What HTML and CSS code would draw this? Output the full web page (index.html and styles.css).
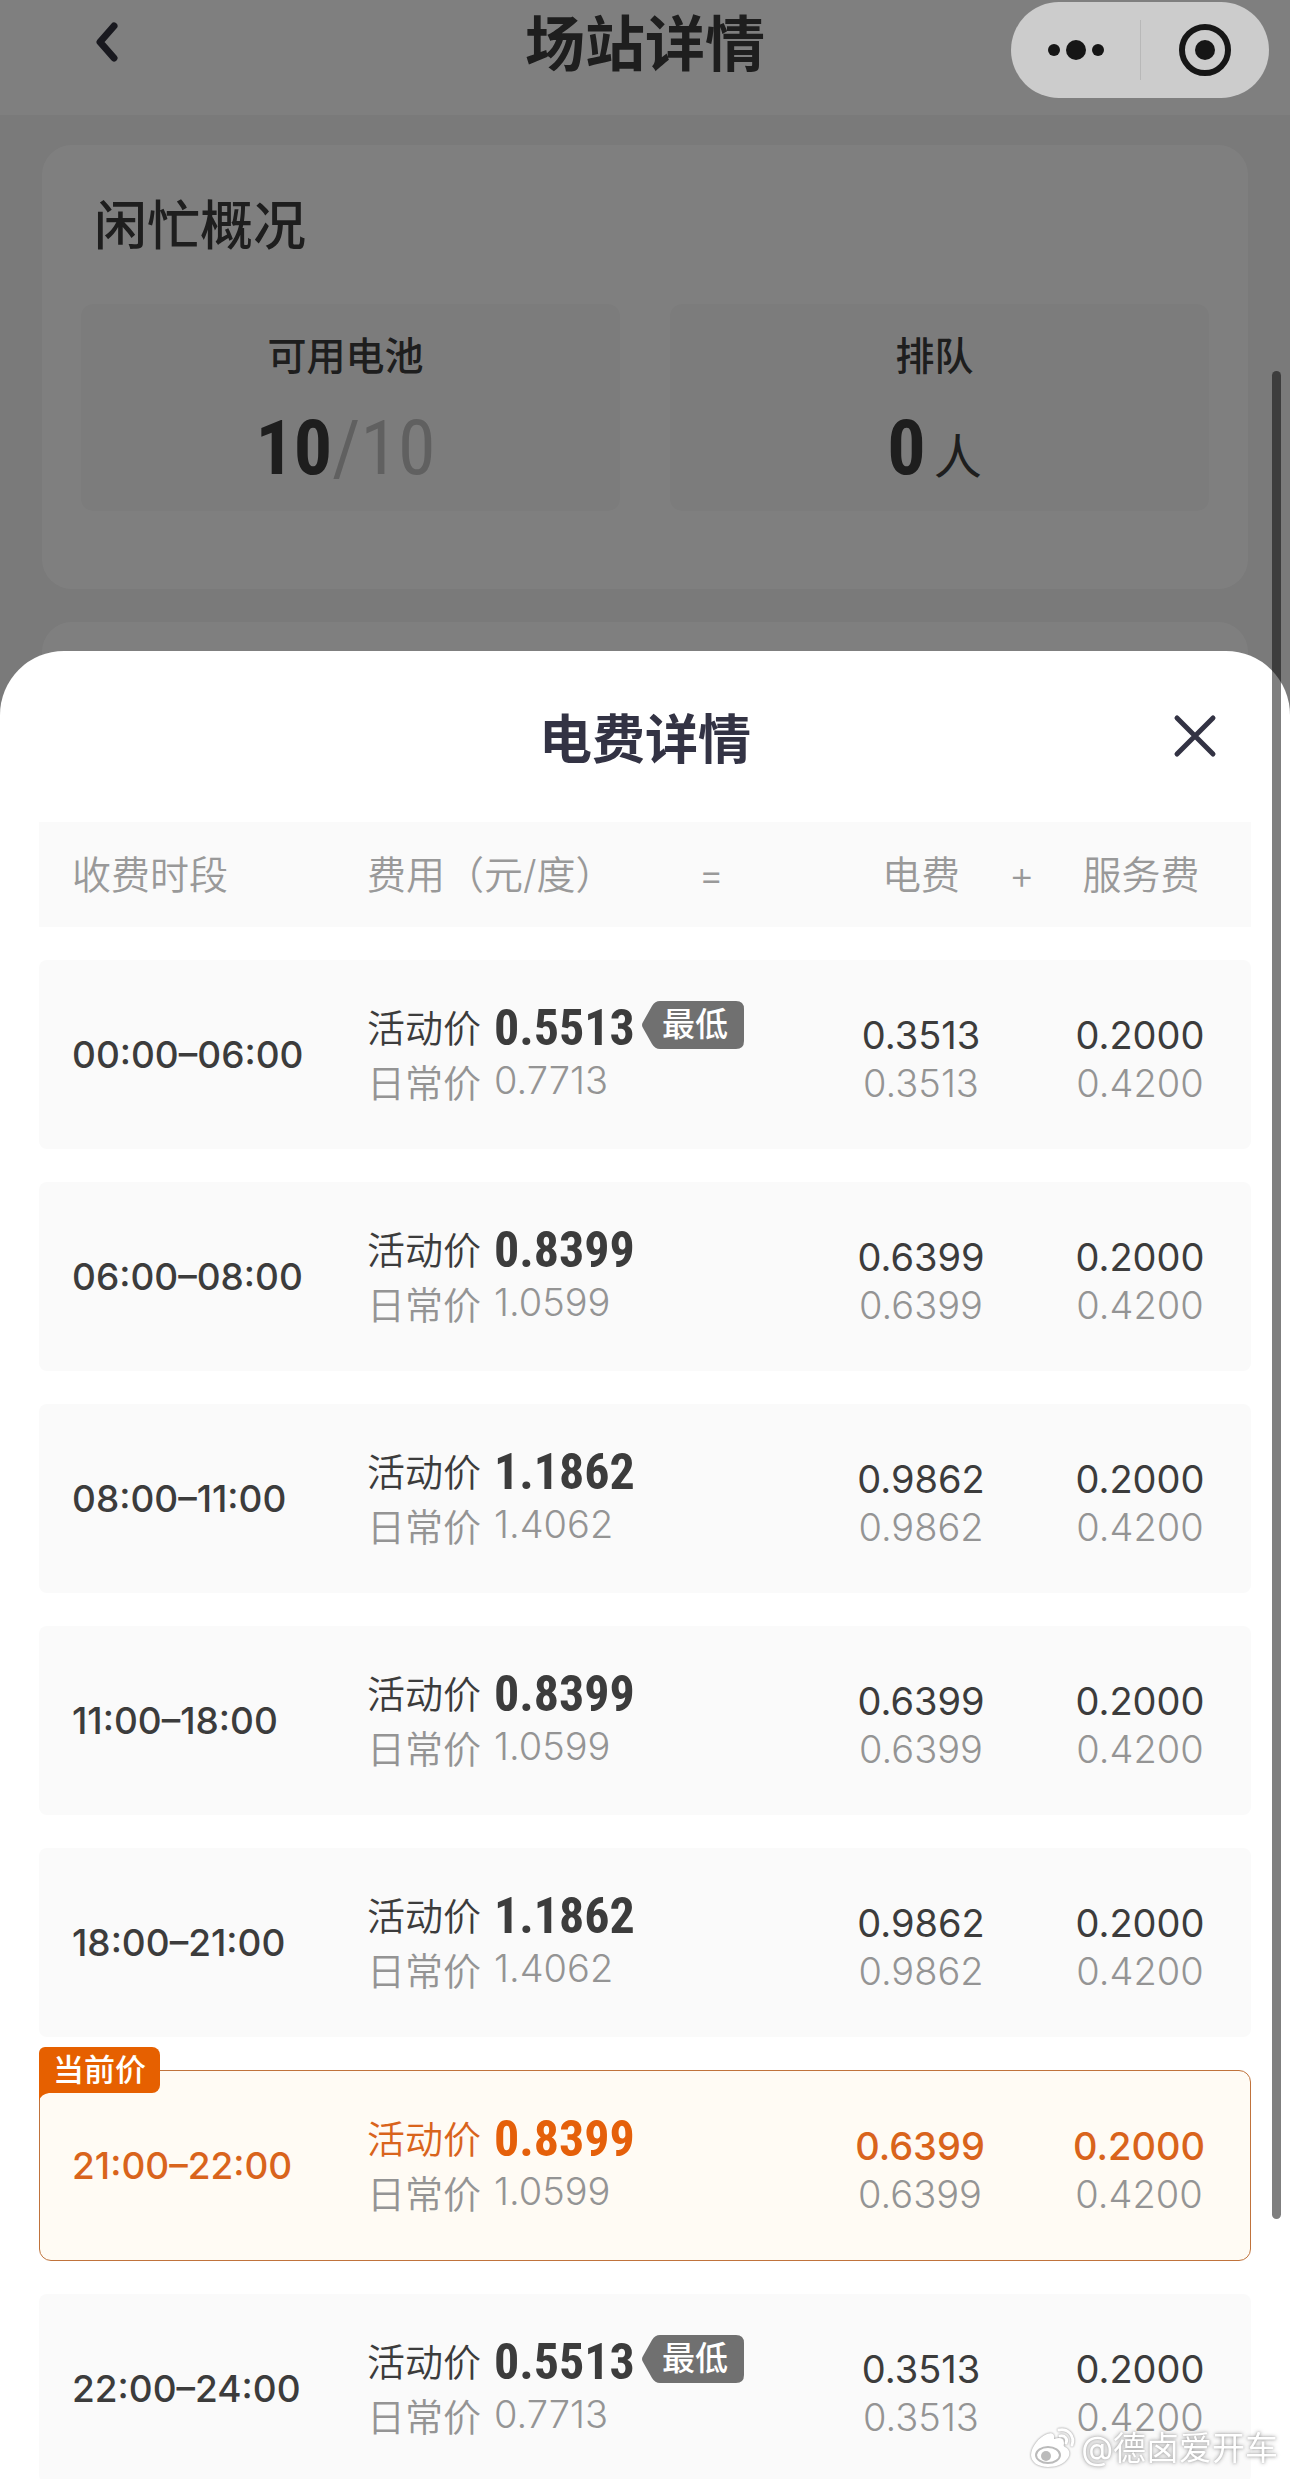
FILE: index.html
```html
<!DOCTYPE html>
<html lang="zh-CN">
	<head>
		<meta charset="UTF-8">
		<title>场站详情</title>
		<link rel="stylesheet" href="styles.css">
	</head>
	<body>
		<!--场站页面-->
		<div class="page">
			<header class="nav">
				<button class="nav-back" aria-label="返回">
					<svg width="24" height="40" viewBox="0 0 24 40"><path d="M20 4L6 20L20 36" /></svg>
				</button>
				<h1 class="nav-title">场站详情</h1>
			</header>
			<section class="card">
				<h2 class="card-title">闲忙概况</h2>
				<div class="stats">
					<div class="stat">
						<p class="stat-name">可用电池</p>
						<p class="stat-num"><b>10</b><span class="stat-total">/10</span></p>
					</div>
					<div class="stat">
						<p class="stat-name">排队</p>
						<p class="stat-num"><b>0</b><span class="stat-unit">人</span></p>
					</div>
				</div>
			</section>
			<section class="card card-next"></section>
		</div>

		<!--电费弹层-->
		<div class="mask">
			<div class="sheet">
				<div class="sheet-head">
					<h2 class="sheet-title">电费详情</h2>
					<button class="sheet-close" aria-label="关闭">
						<svg width="44" height="44" viewBox="0 0 44 44"><path d="M4 4L40 40M40 4L4 40" /></svg>
					</button>
				</div>
				<table class="price">
					<thead>
						<tr class="price-head">
							<th>收费时段</th>
							<th class="th-fee"><span>费用（元/度）</span><span>=</span></th>
							<th class="th-power">电费</th>
							<th class="th-service"><span>+</span><span>服务费</span></th>
						</tr>
					</thead>
					<tbody>
						<tr class="price-row">
							<td class="time">00:00–06:00</td>
							<td class="fee">
								<p class="now">活动价<b>0.5513</b><span class="low"><svg viewBox="0 0 102 48"><path d="M18 0H94Q102 0 102 8V40Q102 48 94 48H18Q13 48 10 43L1 27Q-1 24 1 21L10 5Q13 0 18 0Z" /></svg><i>最低</i></span></p>
								<p class="old">日常价<span>0.7713</span></p>
							</td>
							<td class="part"><p>0.3513</p><p class="old">0.3513</p></td>
							<td class="part part-last"><p>0.2000</p><p class="old">0.4200</p></td>
						</tr>
						<tr class="price-row">
							<td class="time">06:00–08:00</td>
							<td class="fee">
								<p class="now">活动价<b>0.8399</b></p>
								<p class="old">日常价<span>1.0599</span></p>
							</td>
							<td class="part"><p>0.6399</p><p class="old">0.6399</p></td>
							<td class="part part-last"><p>0.2000</p><p class="old">0.4200</p></td>
						</tr>
						<tr class="price-row">
							<td class="time">08:00–11:00</td>
							<td class="fee">
								<p class="now">活动价<b>1.1862</b></p>
								<p class="old">日常价<span>1.4062</span></p>
							</td>
							<td class="part"><p>0.9862</p><p class="old">0.9862</p></td>
							<td class="part part-last"><p>0.2000</p><p class="old">0.4200</p></td>
						</tr>
						<tr class="price-row">
							<td class="time">11:00–18:00</td>
							<td class="fee">
								<p class="now">活动价<b>0.8399</b></p>
								<p class="old">日常价<span>1.0599</span></p>
							</td>
							<td class="part"><p>0.6399</p><p class="old">0.6399</p></td>
							<td class="part part-last"><p>0.2000</p><p class="old">0.4200</p></td>
						</tr>
						<tr class="price-row">
							<td class="time">18:00–21:00</td>
							<td class="fee">
								<p class="now">活动价<b>1.1862</b></p>
								<p class="old">日常价<span>1.4062</span></p>
							</td>
							<td class="part"><p>0.9862</p><p class="old">0.9862</p></td>
							<td class="part part-last"><p>0.2000</p><p class="old">0.4200</p></td>
						</tr>
						<!--当前时段-->
						<tr class="price-row current">
							<td class="time"><span class="current-tag">当前价<svg width="10" height="8" viewBox="0 0 10 8"><path d="M0 0H10Q2 1 0 8Z" /></svg></span>21:00–22:00</td>
							<td class="fee">
								<p class="now">活动价<b>0.8399</b></p>
								<p class="old">日常价<span>1.0599</span></p>
							</td>
							<td class="part"><p>0.6399</p><p class="old">0.6399</p></td>
							<td class="part part-last"><p>0.2000</p><p class="old">0.4200</p></td>
						</tr>
						<tr class="price-row">
							<td class="time">22:00–24:00</td>
							<td class="fee">
								<p class="now">活动价<b>0.5513</b><span class="low"><svg viewBox="0 0 102 48"><path d="M18 0H94Q102 0 102 8V40Q102 48 94 48H18Q13 48 10 43L1 27Q-1 24 1 21L10 5Q13 0 18 0Z" /></svg><i>最低</i></span></p>
								<p class="old">日常价<span>0.7713</span></p>
							</td>
							<td class="part"><p>0.3513</p><p class="old">0.3513</p></td>
							<td class="part part-last"><p>0.2000</p><p class="old">0.4200</p></td>
						</tr>
					</tbody>
				</table>
			</div>
		</div>

		<!--右上角胶囊-->
		<div class="capsule">
			<button class="capsule-btn" aria-label="更多">
				<svg width="60" height="24" viewBox="0 0 60 24"><circle cx="8" cy="12" r="6" /><circle cx="30" cy="12" r="10" /><circle cx="52" cy="12" r="6" /></svg>
			</button>
			<button class="capsule-btn" aria-label="关闭小程序">
				<svg width="52" height="52" viewBox="0 0 52 52"><circle cx="26" cy="26" r="23" fill="none" stroke="#161616" stroke-width="6" /><circle cx="26" cy="26" r="10" /></svg>
			</button>
		</div>
		<div class="scrollbar"></div>
		<div class="watermark">
			<svg width="46" height="40" viewBox="0 0 46 40">
				<path d="M17 6C22 4 25 6 24 11C30 9 34 10 34 15C34 17 33 18 35 19C39 21 41 25 38 30C34 36 27 39 18 39C8 39 1 34 1 27C1 19 9 9 17 6Z" />
				<path class="wm-line" d="M29 2C38 0 45 8 42 17M30 8C35 7 38 11 36 15" />
				<ellipse class="wm-ring" cx="18" cy="27" rx="12" ry="8" />
				<circle class="wm-eye" cx="16" cy="28" r="5" />
			</svg>
			<span>@德卤爱开车</span>
		</div>
	</body>
</html>
```
FILE: styles.css
```css
*{
	padding: 0;
	margin: 0;
	box-sizing: border-box;
}
body{
	height: 100vh;
	overflow: hidden;
	background: #f4f4f4;
	color: #3c3c3c;
	font-family: Inter, "Noto Sans CJK SC", sans-serif;
	font-size: 38px;
}
button{
	border: none;
	background: none;
}
svg{
	display: block;
}
i{
	font-style: normal;
}

/*导航*/
.nav{
	display: flex;
	position: relative;
	justify-content: center;
	height: 115px;
	background: #fff;
}
.nav-back{
	position: absolute;
	left: 94px;
	top: 22px;
}
.nav-back path{
	fill: none;
	stroke: #33333f;
	stroke-width: 7;
	stroke-linecap: round;
	stroke-linejoin: round;
}
.nav-title{
	font-size: 60px;
	font-weight: 600;
	line-height: 88px;
}

/*闲忙概况*/
.card{
	margin: 30px 42px 33px;
	padding: 40px 39px 78px;
	border-radius: 30px;
	background: #fff;
}
.card-next{
	height: 400px;
}
.card-title{
	padding-left: 13px;
	font-size: 53px;
	font-weight: 500;
	line-height: 82px;
}
.stats{
	display: flex;
	gap: 50px;
	margin-top: 37px;
}
.stat{
	flex: 1;
	height: 207px;
	padding: 24px 10px 0 0;
	border-radius: 12px;
	background: #f9f9f9;
	text-align: center;
}
.stat-name{
	font-size: 39px;
	font-weight: 500;
	line-height: 56px;
}
.stat-num{
	margin-top: 4px;
	font-family: "Liberation Sans Narrow", "Roboto Condensed", Roboto, "Noto Sans CJK SC", sans-serif;
	font-size: 76px;
	line-height: 120px;
}
.stat-total{
	color: #c0c0c0;
}
.stat-unit{
	margin-left: 8px;
	font-size: 48px;
}

/*弹层*/
.mask{
	position: fixed;
	top: 0;
	right: 0;
	bottom: 0;
	left: 0;
	padding-top: 651px;
	background: rgba(0,0,0,.5);
}
.sheet{
	height: 100%;
	overflow: hidden;
	padding: 0 39px;
	border-radius: 64px 64px 0 0;
	background: #fff;
}
.sheet-head{
	display: flex;
	position: relative;
	justify-content: center;
	height: 171px;
	padding-top: 48px;
}
.sheet-title{
	color: #333344;
	font-size: 53px;
	font-weight: 600;
	line-height: 82px;
}
.sheet-close{
	position: absolute;
	right: 34px;
	top: 63px;
}
.sheet-close path{
	stroke: #333344;
	stroke-width: 5;
	stroke-linecap: round;
}

/*价格表*/
.price,
.price thead,
.price tbody{
	display: block;
}
.price-head,
.price-row{
	display: grid;
	grid-template-columns: 295px 1fr 176px 242px;
	align-items: center;
	padding-left: 33px;
	background: #fafafa;
}
.price-head{
	height: 105px;
	color: #999;
	font-size: 39px;
	line-height: 56px;
}
.price-head th{
	font-weight: 350;
	text-align: left;
}
.price-head .th-fee{
	display: flex;
	justify-content: space-between;
	padding-right: 109px;
}
.price-head .th-power{
	text-align: center;
}
.price-head .th-service{
	display: flex;
	gap: 48px;
}
.price-row{
	position: relative;
	height: 189px;
	margin-top: 33px;
	border-radius: 8px;
}
.time{
	font-size: 37px;
	font-weight: 500;
}
.fee{
	padding-bottom: 4px;
}
.now,
.fee .old{
	display: flex;
	align-items: center;
	gap: 13px;
	height: 55px;
	font-weight: 350;
}
.now b{
	padding-top: 6px;
	font-family: "Liberation Sans Narrow", "Roboto Condensed", Roboto, sans-serif;
	font-size: 50px;
}
.old{
	color: #949494;
	font-weight: 350;
}
.low{
	position: relative;
	width: 102px;
	height: 48px;
	margin-left: -6px;
	padding-left: 20px;
	color: #fff;
	font-size: 33px;
	font-weight: 500;
	line-height: 46px;
}
.low svg{
	position: absolute;
	top: 0;
	left: 0;
	fill: #707070;
}
.low i{
	position: relative;
}
.part{
	padding-top: 8px;
	line-height: 48px;
	text-align: center;
}
.part-last{
	padding-left: 20px;
}
.current{
	height: 191px;
	padding-left: 32px;
	border: 1px solid #c0733c;
	border-radius: 12px;
	background: #fffbf4;
}
.current .time,
.current .now,
.current .part{
	color: #d9641c;
}
.current .now b{
	color: #e5600a;
}
.current .part p:first-child{
	font-weight: 500;
}
.current .part .old{
	color: #949494;
}
.current-tag{
	position: absolute;
	top: -24px;
	left: -1px;
	height: 46px;
	padding: 0 14px;
	border-radius: 6px 8px 8px 0;
	background: #e66000;
	color: #fff;
	font-size: 31px;
	font-weight: 500;
	line-height: 46px;
}
.current-tag svg{
	position: absolute;
	top: 46px;
	left: 0;
	fill: #e66000;
}

/*胶囊按钮*/
.capsule{
	display: flex;
	position: fixed;
	top: 2px;
	right: 21px;
	width: 258px;
	height: 96px;
	border-radius: 48px;
	background: #ccc;
	fill: #161616;
}
.capsule-btn{
	display: flex;
	flex: 1;
	align-items: center;
	justify-content: center;
}
.capsule-btn + .capsule-btn{
	background: linear-gradient(#b8b8b8,#b8b8b8) no-repeat left center / 1px 60px;
}
.scrollbar{
	position: fixed;
	top: 371px;
	right: 9px;
	bottom: 260px;
	width: 9px;
	border-radius: 5px;
	background: rgba(0,0,0,.5);
}

/*水印*/
.watermark{
	display: flex;
	position: fixed;
	right: 12px;
	bottom: 7px;
	align-items: center;
	gap: 5px;
	color: #fff;
	font-size: 33px;
	line-height: 48px;
	text-shadow: 0 0 4px #999, 0 0 2px #bbb;
}
.watermark svg{
	fill: #fff;
	filter: drop-shadow(0 0 1px #888);
	overflow: visible;
}
.watermark .wm-line{
	fill: none;
	stroke: #fff;
	stroke-width: 3;
	stroke-linecap: round;
}
.watermark .wm-ring{
	fill: #fff;
	stroke: #bbb;
	stroke-width: 2;
}
.watermark .wm-eye{
	fill: #bbb;
}
```
